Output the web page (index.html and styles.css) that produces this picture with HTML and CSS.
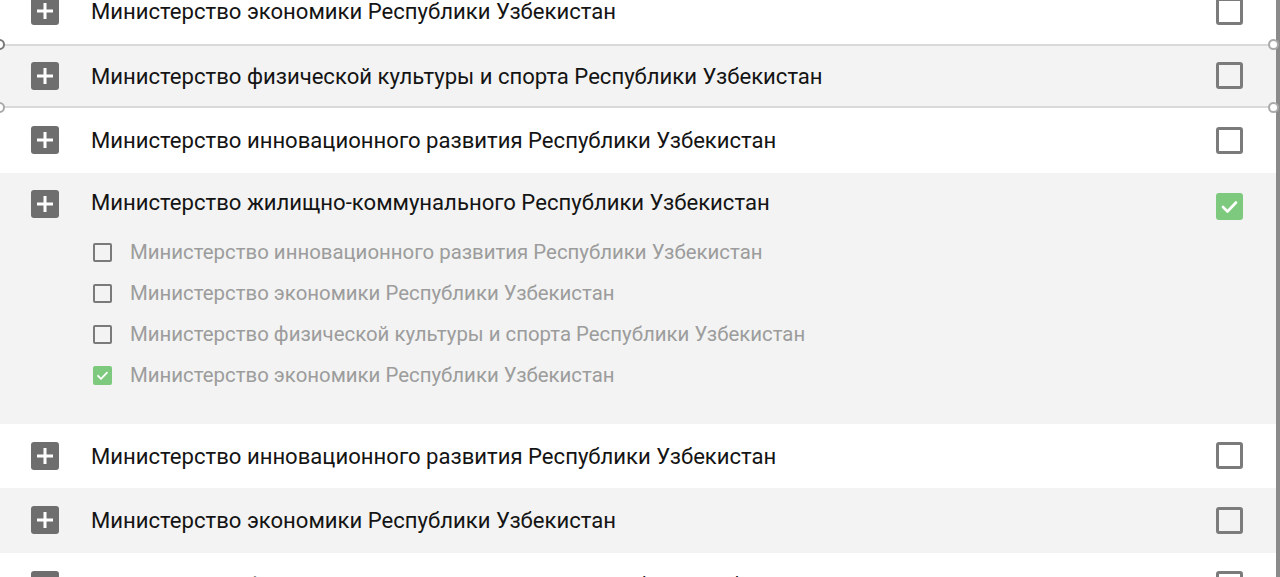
FILE: index.html
```html
<!DOCTYPE html>
<html lang="ru">
<head>
<meta charset="utf-8">
<link rel="stylesheet" href="styles.css">
</head>
<body>
<div class="page">
  <ul class="tree">
    <li class="row">
      <span class="plus"></span>
      <span class="label">Министерство экономики Республики Узбекистан</span>
      <span class="box"></span>
    </li>
    <li class="row row-alt row-selected">
      <span class="handle h-tl"></span><span class="handle h-bl"></span>
      <span class="handle h-tr"></span><span class="handle h-br"></span>
      <span class="plus"></span>
      <span class="label">Министерство физической культуры и спорта Республики Узбекистан</span>
      <span class="box"></span>
    </li>
    <li class="row">
      <span class="plus"></span>
      <span class="label">Министерство инновационного развития Республики Узбекистан</span>
      <span class="box"></span>
    </li>
    <li class="group row-alt">
      <div class="row row-head">
        <span class="plus"></span>
        <span class="label">Министерство жилищно-коммунального Республики Узбекистан</span>
        <span class="box box-on"><svg viewBox="0 0 27 27"><path d="M7 14 L11.5 18.5 L20 9.5" fill="none" stroke="#fff" stroke-width="2.6" stroke-linecap="round" stroke-linejoin="round"/></svg></span>
      </div>
      <ul class="sub">
        <li class="sub-row"><span class="sbox"></span><span class="sub-label">Министерство инновационного развития Республики Узбекистан</span></li>
        <li class="sub-row"><span class="sbox"></span><span class="sub-label">Министерство экономики Республики Узбекистан</span></li>
        <li class="sub-row"><span class="sbox"></span><span class="sub-label">Министерство физической культуры и спорта Республики Узбекистан</span></li>
        <li class="sub-row"><span class="sbox sbox-on"><svg viewBox="0 0 19 19"><path d="M5 9.8 L8 12.8 L14 6.6" fill="none" stroke="#fff" stroke-width="1.8" stroke-linecap="round" stroke-linejoin="round"/></svg></span><span class="sub-label">Министерство экономики Республики Узбекистан</span></li>
      </ul>
    </li>
    <li class="row">
      <span class="plus"></span>
      <span class="label">Министерство инновационного развития Республики Узбекистан</span>
      <span class="box"></span>
    </li>
    <li class="row row-alt">
      <span class="plus"></span>
      <span class="label">Министерство экономики Республики Узбекистан</span>
      <span class="box"></span>
    </li>
    <li class="row">
      <span class="plus"></span>
      <span class="label">Министерство физической культуры и спорта Республики Узбекистан</span>
      <span class="box"></span>
    </li>
  </ul>
  <div class="scrollbar"></div>
</div>
</body>
</html>
```

FILE: styles.css
```css
* { box-sizing: border-box; }
html, body { margin: 0; padding: 0; height: 100%; overflow: hidden; background: #fff; }
body { font-family: Roboto, "Noto Sans", "Liberation Sans", sans-serif; }

.page { display: flex; height: 577px; overflow: hidden; }
.tree { flex: 1; list-style: none; margin: -21px 0 0; padding: 0; }
.scrollbar { width: 4px; background: #8a8a8a; flex: none; }

.row {
  position: relative;
  display: flex;
  align-items: center;
  height: 64.5px;
  padding: 0 33px 0 31px;
}
.row-alt { background: #f2f3f2; }
.row-selected { border-top: 2px solid #d9d9d9; border-bottom: 2px solid #d9d9d9; }

.plus {
  position: relative;
  flex: none;
  width: 28px; height: 28px;
  border-radius: 3px;
  background: #6e6e6e;
}
.plus::before, .plus::after {
  content: "";
  position: absolute;
  background: #fff;
  left: 50%; top: 50%;
}
.plus::before { width: 16px; height: 3px; transform: translate(-50%, -50%); }
.plus::after { width: 3px; height: 16px; transform: translate(-50%, -50%); }

.label {
  flex: 1;
  margin-left: 32px;
  font-size: 22.1px;
  line-height: 26px;
  color: #141414;
  white-space: nowrap;
}

.box {
  flex: none;
  width: 27px; height: 27px;
  border: 3px solid #7b7b7b;
  border-radius: 3px;
}
.box svg { display: block; width: 100%; height: 100%; }
.box-on { border: none; background: #7dca7e; margin-top: 9px; }

.row-head { height: 59px; }
.row-head .plus { margin-top: 4px; }

.sub { list-style: none; margin: 0; padding: 0 0 28px 93px; }
.sub-row { display: flex; align-items: center; height: 41px; }
.sbox {
  flex: none;
  width: 19px; height: 19px;
  border: 2px solid #7a7a7a;
  border-radius: 2px;
}
.sbox svg { display: block; width: 100%; height: 100%; }
.sbox-on { border: none; background: #7dca7e; }
.sub-label {
  margin-left: 18px;
  font-size: 20.4px;
  line-height: 24px;
  color: #9c9c9c;
  white-space: nowrap;
}

.handle {
  position: absolute;
  width: 11px; height: 11px;
  border-radius: 50%;
  background: #fff;
  border: 2px solid #7a7a7a;
}
.h-tl { left: -6px; top: -7px; }
.h-bl { left: -6px; bottom: -7px; border-color: #aaa; }
.h-tr { right: -3px; top: -7px; border-color: #aaa; }
.h-br { right: -3px; bottom: -7px; border-color: #aaa; }
```
